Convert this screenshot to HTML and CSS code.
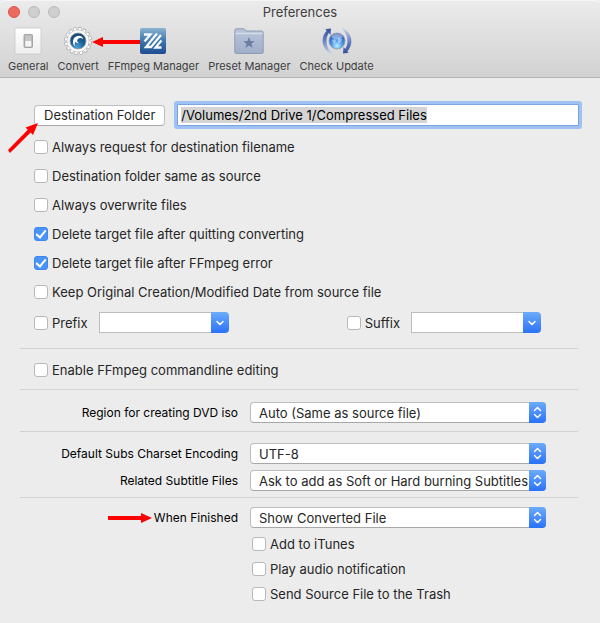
FILE: index.html
```html
<!DOCTYPE html>
<html lang="en">
<head>
  <meta charset="UTF-8">
  <meta name="viewport" content="width=device-width, initial-scale=1.0">
  <title>Preferences</title>
  <link rel="stylesheet" href="styles.css">
</head>
<body>
  <header class="titlebar">
    <div class="title-row">
      <div class="lights">
        <button class="light close" aria-label="Close"></button>
        <button class="light" aria-label="Minimize"></button>
        <button class="light" aria-label="Zoom"></button>
      </div>
      <h1>Preferences</h1>
    </div>
    <nav class="toolbar">
      <button class="tool">
        <svg width="30" height="30" viewBox="0 0 30 30">
          <defs>
            <linearGradient id="plate" x1="0" y1="0" x2="0" y2="1"><stop offset="0" stop-color="#fff"/><stop offset="1" stop-color="#eeeef0"/></linearGradient>
          </defs>
          <rect x="2" y="2" width="26" height="26" rx="1" fill="url(#plate)" stroke="#c4c4c6" stroke-width=".7"/>
          <rect x="11" y="8.500" width="8.500" height="13" rx="1" fill="#b5b5b7" stroke="#98989a" stroke-width=".8"/>
          <rect x="12.300" y="9.500" width="6" height="6" fill="#c6c6c8"/>
          <rect x="12.300" y="15" width="6" height="5.500" fill="#f6f6f6"/>
        </svg>
        <span>General</span>
      </button>
      <button class="tool">
        <svg width="30" height="30" viewBox="0 0 30 30">
          <defs>
            <radialGradient id="disc" cx=".45" cy=".9" r=".9"><stop offset="0" stop-color="#49a3d4"/><stop offset=".5" stop-color="#1d5f97"/><stop offset="1" stop-color="#173f68"/></radialGradient>
          </defs>
          <circle cx="15" cy="15" r="12.300" fill="none" stroke="#9c9c9c" stroke-width="3.200" stroke-dasharray="3.100 1.730"/>
          <circle cx="15" cy="15" r="11.200" fill="#fafafa" stroke="#a4a4a4" stroke-width=".7"/>
          <circle cx="15" cy="15" r="12.100" fill="none" stroke="#fbfbfb" stroke-width="2.400" stroke-dasharray="2.400 2.352" stroke-dashoffset="-.3"/>
          <circle cx="15" cy="15" r="8" fill="url(#disc)" stroke="#8f9aa5" stroke-width=".8"/>
          <path d="M12 20.500C8.800 17.500 9.300 10.800 14.800 9.900c3-.3 5.200 1.300 5.400 3.300-1.500-1.300-4-1.500-5.300-.2-1.300 1.300-.9 3.300.9 4.200-1.500.3-2.900-.3-3.600-1.600-.6 1.700-.7 3.300-.2 4.900z" fill="#fff"/>
        </svg>
        <span>Convert</span>
        <svg class="arrow arrow-convert" width="48" height="12" viewBox="0 0 48 12"><path d="M0 6L11 1v3h37v4H11v3z" fill="#f00"/></svg>
      </button>
      <button class="tool">
        <svg width="30" height="30" viewBox="0 0 30 30">
          <defs>
            <linearGradient id="ff" x1="0" y1="0" x2="0" y2="1"><stop offset="0" stop-color="#8ab3d0"/><stop offset=".5" stop-color="#3b76ac"/><stop offset="1" stop-color="#1d4c92"/></linearGradient>
          </defs>
          <rect x="2" y="2" width="26" height="26" rx="2" fill="url(#ff)"/>
          <path d="M6 8.500h6.500L6.500 15.500M19 7.500L8 21h5L23 9M23.500 14.500L17.500 21.500h6" fill="none" stroke="#f5fafd" stroke-width="2.300"/>
        </svg>
        <span>FFmpeg Manager</span>
      </button>
      <button class="tool">
        <svg width="30" height="30" viewBox="0 0 30 30">
          <defs>
            <linearGradient id="folder" x1="0" y1="0" x2="0" y2="1"><stop offset="0" stop-color="#b9c5da"/><stop offset="1" stop-color="#a0aec8"/></linearGradient>
          </defs>
          <path d="M.8 26V4.500q0-1.700 1.700-1.700h7q1.200 0 1.700 1.200t1.800 1h14.500q1.700 0 1.700 1.700V26q0 1.500-1.500 1.500H2.300Q.8 27.500.8 26z" fill="url(#folder)" stroke="#8997b1" stroke-width=".9"/>
          <path d="M1.500 7.500h27" stroke="#d4dcea" stroke-width="1.500"/>
          <path d="M15 11l1.500 4 4.300.2-3.400 2.600 1.200 4.200-3.600-2.400-3.600 2.400 1.200-4.200-3.400-2.600 4.300-.2z" fill="#6b7da1"/>
        </svg>
        <span>Preset Manager</span>
      </button>
      <button class="tool">
        <svg width="30" height="30" viewBox="0 0 30 30">
          <defs>
            <radialGradient id="globe" cx=".5" cy=".8" r=".8"><stop offset="0" stop-color="#bdf0ff"/><stop offset=".45" stop-color="#4c94e6"/><stop offset="1" stop-color="#234fa8"/></radialGradient>
            <linearGradient id="armL" x1="0" y1="0" x2="0" y2="1"><stop offset="0" stop-color="#324f9c"/><stop offset=".5" stop-color="#6b86c6"/><stop offset="1" stop-color="#c6d2ea"/></linearGradient>
            <linearGradient id="armR" x1="0" y1="1" x2="0" y2="0"><stop offset="0" stop-color="#324f9c"/><stop offset=".5" stop-color="#6b86c6"/><stop offset="1" stop-color="#c6d2ea"/></linearGradient>
          </defs>
          <path d="M9 2.500L3.200 3.200l1.500 1.500C-1.500 11-1 22 8.500 27.500l2 .3C4 22 2.800 14 6.700 7l1.800 2z" fill="url(#armL)"/>
          <path d="M21 27.500l5.800-.7-1.500-1.500C31.500 19 31 8 21.500 2.500l-2-.3C26 8 27.200 16 23.300 23l-1.800-2z" fill="url(#armR)"/>
          <circle cx="15" cy="15" r="8" fill="url(#globe)" stroke="#8f9cb8" stroke-width=".8"/>
          <ellipse cx="15" cy="10.500" rx="5.500" ry="3" fill="#fff" opacity=".4"/>
          <path d="M10 14l3-1 1 2-2 3zM16 12l4 1-1 3-3 1z" fill="#d8f4ff" opacity=".5"/>
        </svg>
        <span>Check Update</span>
      </button>
    </nav>
  </header>

  <main class="prefs">
    <section class="group">
      <div class="dest">
        <button class="push">Destination Folder</button>
        <svg class="arrow arrow-dest" width="30" height="30" viewBox="0 0 30 30"><path d="M30 0l-5 12-2.400-2.400L2 30 0 27 19.800 6.800 17.500 4.500z" fill="#f00"/></svg>
        <input class="path" id="path" type="text" value="/Volumes/2nd Drive 1/Compressed Files" aria-label="Destination folder" spellcheck="false">
      </div>
      <label class="check"><input type="checkbox">Always request for destination filename</label>
      <label class="check"><input type="checkbox">Destination folder same as source</label>
      <label class="check"><input type="checkbox">Always overwrite files</label>
      <label class="check"><input type="checkbox" checked>Delete target file after quitting converting</label>
      <label class="check"><input type="checkbox" checked>Delete target file after FFmpeg error</label>
      <label class="check"><input type="checkbox">Keep Original Creation/Modified Date from source file</label>
      <div class="affixes">
        <div class="affix">
          <label class="check"><input type="checkbox">Prefix</label>
          <div class="combo">
            <input type="text" aria-label="Prefix text">
            <button aria-label="Show prefixes"><svg width="8" height="6" viewBox="0 0 8 6"><path d="M1 1.500l3 3 3-3"/></svg></button>
          </div>
        </div>
        <div class="affix">
          <label class="check"><input type="checkbox">Suffix</label>
          <div class="combo">
            <input type="text" aria-label="Suffix text">
            <button aria-label="Show suffixes"><svg width="8" height="6" viewBox="0 0 8 6"><path d="M1 1.500l3 3 3-3"/></svg></button>
          </div>
        </div>
      </div>
    </section>

    <section class="group compact">
      <label class="check"><input type="checkbox">Enable FFmpeg commandline editing</label>
    </section>

    <section class="group fields region">
      <label for="region">Region for creating DVD iso</label>
      <div class="popup">
        <select id="region"><option>Auto (Same as source file)</option></select>
        <svg width="17" height="21" viewBox="0 0 17 21"><path d="M5.500 8.500l3-3 3 3M5.500 12.500l3 3 3-3"/></svg>
      </div>
    </section>

    <section class="group fields subtitles">
      <label for="charset">Default Subs Charset Encoding</label>
      <div class="popup">
        <select id="charset"><option>UTF-8</option></select>
        <svg width="17" height="21" viewBox="0 0 17 21"><path d="M5.500 8.500l3-3 3 3M5.500 12.500l3 3 3-3"/></svg>
      </div>
      <label for="subs">Related Subtitle Files</label>
      <div class="popup">
        <select id="subs"><option>Ask to add as Soft or Hard burning Subtitles</option></select>
        <svg width="17" height="21" viewBox="0 0 17 21"><path d="M5.500 8.500l3-3 3 3M5.500 12.500l3 3 3-3"/></svg>
      </div>
    </section>

    <section class="group fields finish">
      <label for="finished">
        <svg class="arrow arrow-finished" width="44" height="12" viewBox="0 0 44 12"><path d="M44 6L33 1v3H0v4h33v3z" fill="#f00"/></svg>
        When Finished
      </label>
      <div class="popup">
        <select id="finished"><option>Show Converted File</option></select>
        <svg width="17" height="21" viewBox="0 0 17 21"><path d="M5.500 8.500l3-3 3 3M5.500 12.500l3 3 3-3"/></svg>
      </div>
      <div class="after">
        <label class="check"><input type="checkbox">Add to iTunes</label>
        <label class="check"><input type="checkbox">Play audio notification</label>
        <label class="check"><input type="checkbox">Send Source File to the Trash</label>
      </div>
    </section>
  </main>

  <script>
    /* Path starts focused with its text selected */
    const path=document.getElementById('path');path.focus();path.select();
  </script>
</body>
</html>
```
FILE: styles.css
```css
:root {
  --bg:#ececec;
  --fg:#262626;
  --line:#d2d2d2;
  --edge:#bdbdbd;
  --blue-top:#6cabf8;
  --blue-bottom:#2a72f8;
}
*{box-sizing:border-box;margin:0;padding:0;}
body{
  font-family:Inter,'Liberation Sans',sans-serif;
  font-size:13px;
  line-height:16px;
  background:var(--bg);
  color:var(--fg);
}
button,input,select{font:inherit;color:inherit;border:none;background:none;outline:none;}

/* ------- TITLE BAR ------- */
.titlebar{height:78px;background:linear-gradient(#ebebeb,#d2d2d2);border-top:1px solid #f5f5f5;border-bottom:1px solid #b4b4b4;border-radius:5px 5px 0 0;}
.title-row{display:grid;grid-template-columns:1fr auto 1fr;align-items:center;height:21px;padding:0 8px;}
h1{font-size:13px;font-weight:400;color:#404040;}
.lights{display:flex;gap:8px;}
.light{width:12px;height:12px;border-radius:50%;background:#cfcfcf;border:1px solid #b9b9b9;}
.light.close{background:#ee6a5f;border-color:#d9554b;}
.toolbar{display:flex;gap:9px;padding:4px 8px 0;}
.tool{position:relative;display:flex;flex-direction:column;align-items:center;gap:2px;font-size:11px;line-height:16px;color:#404040;white-space:nowrap;}

.arrow{position:absolute;}
.arrow-convert{left:34px;top:10px;z-index:1;}
.arrow-dest{left:-26px;top:22px;}
.arrow-finished{right:86px;top:2px;}

/* ------- CONTENT ------- */
.prefs{padding:23px 18px 20px;}
.group{margin:0 4px 0 2px;padding:0 14px;}
.group + .group{border-top:1px solid var(--line);}
.dest{position:relative;display:flex;align-items:center;gap:12px;margin:0 -15px 3px 0;height:28px;}
.push{height:21px;padding:0 9px;background:#fff;border:1px solid var(--edge);border-bottom-color:#a8a8a8;border-radius:4px;white-space:nowrap;}
.path{flex:1;min-width:0;height:22px;padding:0 3px;background:#fff;border:1px solid #7ba3dd;box-shadow:0 0 0 3px #a0c1f3;border-radius:1px;color:#000;}
.path::selection{background:#d4d4d4;color:#000;}

.check{display:flex;align-items:center;gap:4px;height:29px;white-space:nowrap;}
.check input{appearance:none;display:grid;place-items:center;width:14px;height:14px;background:#fff;border:1px solid #b8b8b8;border-radius:3px;}
.check input:checked{background:#4a93f9;border-color:#3f87f0;}
.check input:checked::after{content:'';width:4px;height:8px;margin-bottom:2px;border:solid #fff;border-width:0 2px 2px 0;transform:rotate(40deg);}

.affixes{display:flex;gap:118px;padding:2px 0 11px;}
.affix{display:flex;align-items:center;gap:11px;}
.combo{display:flex;height:21px;}
.combo input{width:112px;background:#fff;border:1px solid var(--edge);border-right:none;}
.combo button{display:grid;place-items:center;width:18px;background:linear-gradient(var(--blue-top),var(--blue-bottom));border-radius:0 4px 4px 0;}
.combo path,.popup path{fill:none;stroke:#fff;stroke-width:1.500;stroke-linecap:round;stroke-linejoin:round;}

.compact{padding-top:6px;padding-bottom:5px;}
.fields{display:grid;grid-template-columns:204px 296px;column-gap:12px;row-gap:6px;align-items:center;}
.fields > label{position:relative;text-align:right;font-size:12px;color:#000;white-space:nowrap;}
.region{padding-top:12px;padding-bottom:8px;}
.subtitles{padding-top:11px;padding-bottom:6px;}
.finish{padding-top:9px;row-gap:3px;}
.popup{display:grid;height:21px;}
.popup > *{grid-area:1/1;}
.popup select{appearance:none;width:100%;height:21px;padding:0 17px 0 8px;background:#fff;border:1px solid var(--edge);border-bottom-color:#a8a8a8;border-radius:4px;}
.popup svg{justify-self:end;background:linear-gradient(var(--blue-top),var(--blue-bottom));border-radius:0 4px 4px 0;pointer-events:none;}
.after{grid-column:2;padding-left:2px;}
.after .check{height:25px;}
```
